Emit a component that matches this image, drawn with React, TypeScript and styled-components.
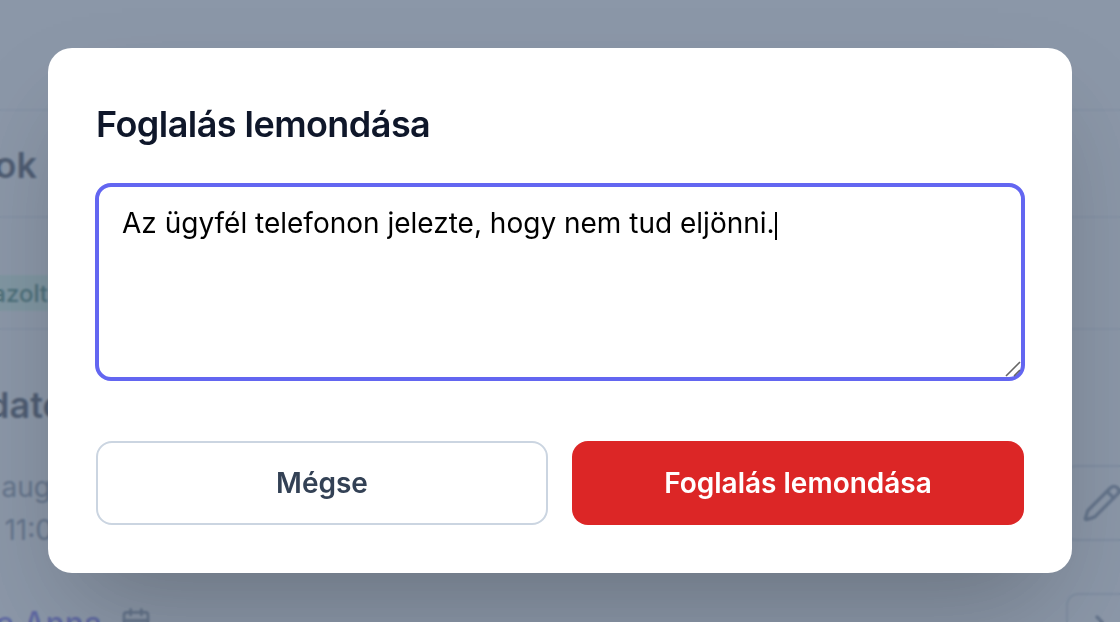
import React, { useEffect, useRef } from "react";
import styled, { createGlobalStyle } from "styled-components";
import { Pencil, ChevronRight, CalendarDays } from "lucide-react";

const GlobalStyle = createGlobalStyle`
  html, body {
    margin: 0;
    height: 100%;
    overflow: hidden;
    background: #fff;
    font-family: Inter, "Liberation Sans", sans-serif;
  }
`;

const Page = styled.div`
  width: 1120px;
  height: 622px;
  overflow: hidden;
  background: #fff;
`;

const Header = styled.header`
  height: 111px;
  box-sizing: border-box;
  border-bottom: 2px solid #e2e8f0;
`;

const PageTitle = styled.h1`
  width: 37px;
  height: 105px;
  margin: 0;
  display: flex;
  align-items: center;
  justify-content: flex-end;
  padding-top: 2px;
  box-sizing: border-box;
  font-size: 36px;
  font-weight: 600;
  color: #0f172a;
  white-space: nowrap;
`;

const Rule = styled.div`
  height: 2px;
  background: #e2e8f0;
`;

const Clip = styled.div<{ $width?: number }>`
  width: ${(p) => p.$width ?? 48}px;
  display: flex;
  justify-content: flex-end;
  white-space: nowrap;
`;

const Status = styled(Clip)`
  margin-top: 57px;
  margin-bottom: 17px;
  height: 36px;
  align-items: center;
  font-size: 24px;
  font-weight: 500;
  color: #065f46;
  background: #d1fae5;
`;

const Details = styled.section`
  display: flex;
  justify-content: space-between;
  align-items: flex-start;
`;

const DetailText = styled.div`
  display: flex;
  flex-direction: column;
`;

const SectionTitle = styled(Clip)`
  margin-top: 50px;
  height: 50px;
  align-items: center;
  font-size: 36px;
  font-weight: 600;
  color: #0f172a;
`;

const DateLine = styled(Clip)`
  margin-top: 37px;
  height: 40px;
  align-items: center;
  font-size: 28px;
  color: #64748b;
`;

const TimeLine = styled(DateLine)`
  margin-top: 3px;
`;

const IconButton = styled.button`
  width: 76px;
  height: 76px;
  margin: 135px -20px 0 0;
  padding: 0;
  display: flex;
  align-items: center;
  justify-content: center;
  background: #fff;
  border: 2px solid #cbd5e1;
  border-radius: 12px;
  color: #64748b;
`;

const NextRow = styled.div`
  margin-top: 43px;
  display: flex;
  justify-content: space-between;
  align-items: flex-start;
`;

const ClientName = styled.div`
  display: flex;
  align-items: flex-start;
  gap: 18px;
  margin: 11px 0 0 -83px;
  font-size: 32px;
  line-height: 40px;
  font-weight: 500;
  color: #4f46e5;
  white-space: nowrap;

  svg {
    margin-top: 3px;
    color: #64748b;
  }
`;

const NextButton = styled.button`
  width: 72px;
  height: 68px;
  margin-right: -18px;
  padding: 0;
  display: flex;
  align-items: center;
  justify-content: center;
  background: #fff;
  border: 2px solid #cbd5e1;
  border-radius: 12px;
  color: #64748b;
`;

const Overlay = styled.div`
  position: fixed;
  inset: 0;
  padding: 48px;
  box-sizing: border-box;
  background: rgba(100, 116, 139, 0.75);
  backdrop-filter: blur(1px);
`;

const Dialog = styled.div`
  width: 1024px;
  height: 525px;
  box-sizing: border-box;
  padding: 48px;
  display: flex;
  flex-direction: column;
  background: #fff;
  border-radius: 24px;
  box-shadow: 0 50px 100px -24px rgba(0, 0, 0, 0.25);
`;

const DialogTitle = styled.h2`
  margin: 0;
  font-size: 36px;
  line-height: 56px;
  font-weight: 600;
  letter-spacing: -0.55px;
  color: #0f172a;
`;

const ReasonField = styled.div`
  position: relative;
  width: 930px;
  height: 198px;
  margin: 31px -1px 0 -1px;
`;

const Reason = styled.textarea`
  display: block;
  width: 100%;
  height: 100%;
  box-sizing: border-box;
  padding: 16px 23px;
  font-family: Inter, "Liberation Sans", sans-serif;
  font-size: 28px;
  line-height: 40px;
  color: #000;
  caret-color: transparent;
  background: #fff;
  border: 4px solid #6366f1;
  border-radius: 16px;
  outline: none;
  resize: none;
`;

const Caret = styled.span`
  position: absolute;
  left: 680px;
  top: 29px;
  width: 2px;
  height: 28px;
  background: #000;
`;

const ResizeGrip = styled.svg`
  position: absolute;
  right: 4px;
  bottom: 4px;
  width: 16px;
  height: 16px;
`;

const Actions = styled.div`
  margin-top: 60px;
  display: grid;
  grid-template-columns: 1fr 1fr;
  gap: 24px;
`;

const ActionButton = styled.button<{ $danger?: boolean }>`
  height: 84px;
  font-family: Inter, "Liberation Sans", sans-serif;
  font-size: 28px;
  font-weight: 600;
  border-radius: 16px;
  color: ${(p) => (p.$danger ? "#fff" : "#334155")};
  background: ${(p) => (p.$danger ? "#dc2626" : "#fff")};
  border: ${(p) => (p.$danger ? "0" : "2px solid #cbd5e1")};
`;

export default function App() {
  const reasonRef = useRef<HTMLTextAreaElement>(null);

  useEffect(() => {
    const el = reasonRef.current;
    if (el) {
      el.focus();
      el.setSelectionRange(el.value.length, el.value.length);
    }
  }, []);

  return (
    <>
      <GlobalStyle />
      <Page>
        <Header />
        <PageTitle>Foglalások</PageTitle>
        <Rule />
        <Status>
          <span>Visszaigazolt</span>
        </Status>
        <Rule />
        <Details>
          <DetailText>
            <SectionTitle $width={85}>
              <span>Időpont adatok</span>
            </SectionTitle>
            <DateLine $width={51}>
              <span>2025. aug</span>
            </DateLine>
            <TimeLine $width={53}>
              <span>10:00 - 11:0</span>
            </TimeLine>
          </DetailText>
          <IconButton aria-label="Szerkesztés">
            <Pencil size={40} strokeWidth={2} />
          </IconButton>
        </Details>
        <NextRow>
          <ClientName>
            Kende Anna
            <CalendarDays size={32} strokeWidth={2} />
          </ClientName>
          <NextButton aria-label="Tovább">
            <ChevronRight size={40} strokeWidth={2} />
          </NextButton>
        </NextRow>
      </Page>
      <Overlay>
        <Dialog>
          <DialogTitle>Foglalás lemondása</DialogTitle>
          <ReasonField>
            <Reason
              ref={reasonRef}
              defaultValue="Az ügyfél telefonon jelezte, hogy nem tud eljönni."
            />
            <Caret />
            <ResizeGrip viewBox="0 0 16 16" aria-hidden="true">
              <path
                d="M1 15 L15 1 M9 15 L15 9"
                stroke="#666"
                strokeWidth="1.6"
                fill="none"
              />
            </ResizeGrip>
          </ReasonField>
          <Actions>
            <ActionButton>Mégse</ActionButton>
            <ActionButton $danger>Foglalás lemondása</ActionButton>
          </Actions>
        </Dialog>
      </Overlay>
    </>
  );
}
